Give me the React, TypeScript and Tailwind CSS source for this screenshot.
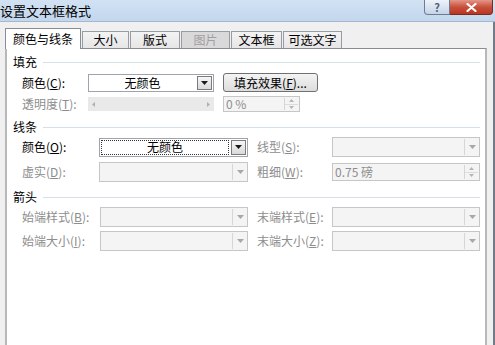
import * as React from 'react';

const cx = (...c: (string | false | undefined)[]) => c.filter(Boolean).join(' ');

function Key({ label, k, tail = '):' }: { label: string; k: string; tail?: string }) {
  return (
    <>
      {label}(<span className="underline underline-offset-1">{k}</span>{tail}
    </>
  );
}

function Arrow({ disabled }: { disabled?: boolean }) {
  return (
    <svg width="7" height="4" viewBox="0 0 7 4" aria-hidden="true">
      <path d="M0 0h7L3.5 4z" fill={disabled ? '#a8a8a8' : '#1a1a1a'} />
    </svg>
  );
}

function Combo({
  value,
  className,
  disabled,
  focused,
}: {
  value?: string;
  className: string;
  disabled?: boolean;
  focused?: boolean;
}) {
  return (
    <div
      className={cx(
        'flex h-full items-stretch border',
        disabled ? 'border-[#c6c6c6] bg-[#f4f4f4]' : 'border-[#9da4ad] bg-white',
        className,
      )}
    >
      <div className="flex flex-1 items-center p-[1px]">
        <div
          className={cx(
            'flex h-full flex-1 items-center justify-center text-black',
            focused && 'border border-dotted border-[#333]',
          )}
        >
          {value}
        </div>
      </div>
      {disabled ? (
        <div className="my-[1px] flex w-[15px] items-center justify-center border-l border-[#d6d6d6]">
          <Arrow disabled />
        </div>
      ) : (
        <div className="m-[1px] flex w-[15px] items-center justify-center border border-[#7b7b7b] bg-[linear-gradient(#f6f6f6,#d9d9d9)]">
          <Arrow />
        </div>
      )}
    </div>
  );
}

function Spin({ value, className }: { value: string; className: string }) {
  return (
    <div className={cx('flex h-full border border-[#c6c6c6] bg-[#f4f4f4]', className)}>
      <div className="flex flex-1 items-center pl-[2px] text-[#8d8d8d]">{value}</div>
      <div className="my-[1px] mr-[1px] flex w-[14px] flex-col border-l border-[#d6d6d6]">
        <div className="flex flex-1 items-center justify-center border-b border-[#dcdcdc]">
          <svg width="5" height="3" viewBox="0 0 5 3"><path d="M0 3h5L2.5 0z" fill="#b5b5b5" /></svg>
        </div>
        <div className="flex flex-1 items-center justify-center">
          <svg width="5" height="3" viewBox="0 0 5 3"><path d="M0 0h5L2.5 3z" fill="#b5b5b5" /></svg>
        </div>
      </div>
    </div>
  );
}

function Heading({ children, className }: { children: React.ReactNode; className?: string }) {
  return (
    <div className={cx('flex h-4 items-center pl-[6px] pr-[5px]', className)}>
      <span className="text-black">{children}</span>
      <div className="ml-[6px] h-px flex-1 bg-[#d5dfe8]" />
    </div>
  );
}

const tabs = [
  { t: '大小', w: 'w-[47px]' },
  { t: '版式', w: 'w-[50px]' },
  { t: '图片', w: 'w-[49px]', off: true },
  { t: '文本框', w: 'w-[51px]' },
  { t: '可选文字', w: 'w-[59px]' },
];

export default function App() {
  return (
    <div className="h-[345px] w-[495px] overflow-hidden bg-[#f0f0f0] font-['Noto_Sans_CJK_SC','Noto_Sans',sans-serif] text-[12px] leading-4">
      {/* Title bar */}
      <div className="flex h-[22px] items-start border-b border-[#a7b6ca] bg-[linear-gradient(#d2e2f4,#c2d6ed)]">
        <span className="mt-[2px] flex-1 text-[13px] leading-[18px] text-black">设置文本框格式</span>
        <span className="flex h-[15px] w-[26px] items-center justify-center rounded-bl-[4px] border border-t-0 border-[#6e7c93] bg-[linear-gradient(#eef3fa,#c6d4e6)] text-[11px] font-bold leading-[14px] text-[#50607a]">
          ?
        </span>
        <span className="mr-[2px] flex h-[15px] w-[43px] items-center justify-center rounded-br-[4px] border border-l-0 border-t-0 border-[#7a2a22] bg-[#c9563f] bg-[linear-gradient(#e49688,#c8503c_50%,#b93620)]">
          <svg width="11" height="9" viewBox="0 0 11 9" aria-hidden="true">
            <path d="M1.5 1l8 7M9.5 1l-8 7" stroke="#fff" strokeWidth="2.2" strokeLinecap="round" />
          </svg>
        </span>
      </div>

      <div className="flex h-[323px] flex-col border-r-2 border-[#737b8a]">
        {/* Tabs */}
        <div className="mt-[6px] flex h-[20px] items-end pl-[5px]">
          <div className="relative z-10 -mb-px flex h-[21px] w-[76px] items-center justify-center border border-b-0 border-[#898c95] bg-white text-black">
            颜色与线条
          </div>
          {tabs.map((tab) => (
            <div
              key={tab.t}
              className={cx(
                'ml-px flex h-[17px] items-center justify-center border border-b-0 border-[#9a9ca3]',
                tab.w,
                tab.off
                  ? 'bg-[#d9d9d9] text-[#a0a0a0]'
                  : 'bg-[linear-gradient(#f3f3f3,#e6e6e6)] text-black',
              )}
            >
              {tab.t}
            </div>
          ))}
        </div>

        {/* Panel */}
        <div className="ml-[5px] mr-[6px] flex flex-1 flex-col border-x-2 border-t border-x-[#b8b8b8] border-t-[#898c95] bg-white pt-[5px] text-[#8d8d8d]">
          <Heading>填充</Heading>
          <div className="mt-[3px] flex h-[19px] items-center pl-[15px]">
            <span className="w-[66px] text-black">
              <Key label="颜色" k="C" />
            </span>
            <div className="h-[18px]">
              <Combo value="无颜色" className="w-[126px]" />
            </div>
            <button className="ml-[9px] flex h-[19px] w-[95px] items-center justify-center rounded-[3px] border border-[#707070] bg-[linear-gradient(#f4f4f4,#dcdcdc)] text-black">
              填充效果(<span className="underline underline-offset-1">F</span>)...
            </button>
          </div>
          <div className="mt-1 flex h-4 items-center pl-[15px]">
            <span className="w-[66px]">
              <Key label="透明度" k="T" />
            </span>
            <div className="flex h-[14px] w-[126px] items-center justify-between bg-[#e9e9e9] px-[4px]">
              <svg width="3" height="5" viewBox="0 0 3 5"><path d="M3 0v5L0 2.5z" fill="#b0b0b0" /></svg>
              <svg width="3" height="5" viewBox="0 0 3 5"><path d="M0 0v5l3-2.5z" fill="#b0b0b0" /></svg>
            </div>
            <div className="ml-[9px] h-4">
              <Spin value="0 %" className="w-[77px]" />
            </div>
          </div>

          <Heading className="mt-[7px]">线条</Heading>
          <div className="mt-[2px] flex h-5 items-center pl-[15px]">
            <span className="w-[77px] text-black">
              <Key label="颜色" k="O" />
            </span>
            <div className="h-[19px]">
              <Combo value="无颜色" className="w-[149px]" focused />
            </div>
            <span className="ml-[9px] w-[75px]">
              <Key label="线型" k="S" />
            </span>
            <div className="h-5">
              <Combo className="w-[148px]" disabled />
            </div>
          </div>
          <div className="mt-[5px] flex h-5 items-center pl-[15px]">
            <span className="w-[77px]">
              <Key label="虚实" k="D" />
            </span>
            <div className="h-5">
              <Combo className="w-[149px]" disabled />
            </div>
            <span className="ml-[9px] w-[75px]">
              <Key label="粗细" k="W" />
            </span>
            <div className="h-[18px]">
              <Spin value="0.75 磅" className="w-[148px]" />
            </div>
          </div>

          <Heading className="mt-[7px]">箭头</Heading>
          <div className="mt-[2px] flex h-5 items-center pl-[15px]">
            <span className="w-[78px]">
              <Key label="始端样式" k="B" />
            </span>
            <div className="h-5">
              <Combo className="w-[148px]" disabled />
            </div>
            <span className="ml-[9px] w-[75px]">
              <Key label="末端样式" k="E" />
            </span>
            <div className="h-5">
              <Combo className="w-[148px]" disabled />
            </div>
          </div>
          <div className="mt-1 flex h-5 items-center pl-[15px]">
            <span className="w-[78px]">
              <Key label="始端大小" k="I" />
            </span>
            <div className="h-5">
              <Combo className="w-[148px]" disabled />
            </div>
            <span className="ml-[9px] w-[75px]">
              <Key label="末端大小" k="Z" />
            </span>
            <div className="h-5">
              <Combo className="w-[148px]" disabled />
            </div>
          </div>
        </div>
      </div>
    </div>
  );
}
